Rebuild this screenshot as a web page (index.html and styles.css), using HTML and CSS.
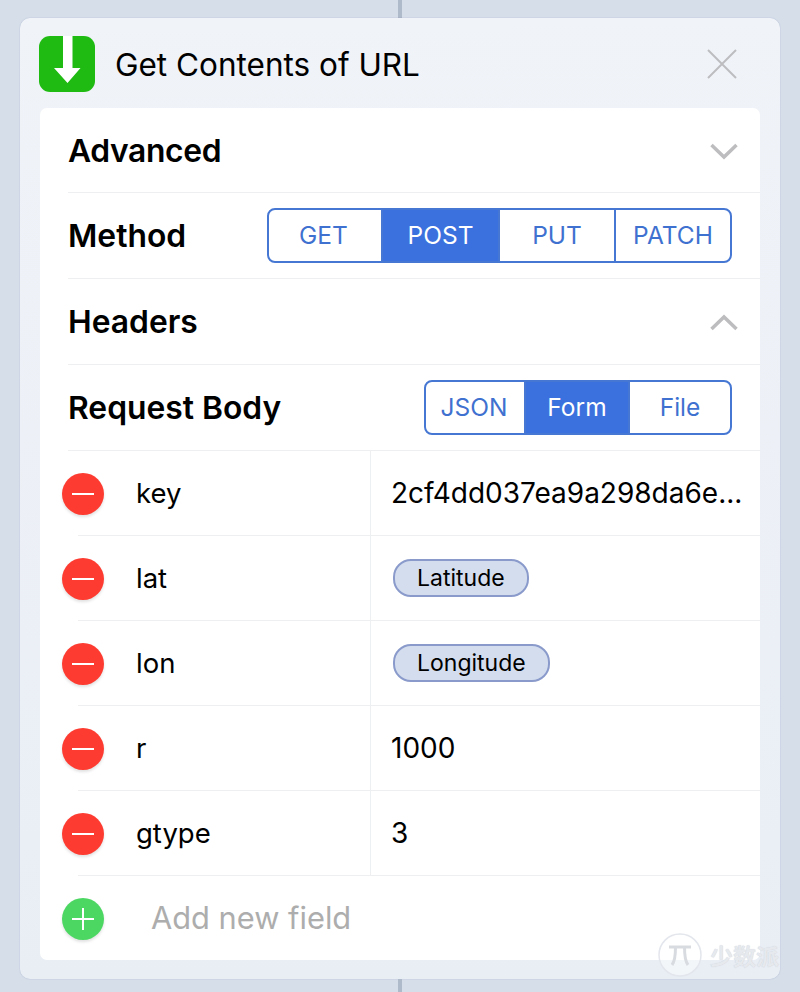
FILE: index.html
```html
<!DOCTYPE html>
<html lang="en">
<head>
  <meta charset="UTF-8" />
  <title>Get Contents of URL</title>
  <link rel="stylesheet" href="styles.css">
</head>
<body>

<div class="connector connector-top"></div>

<div class="card">
  <div class="card-head">
    <svg class="app-icon" width="56" height="56" viewBox="0 0 56 56">
      <rect width="56" height="56" rx="11" fill="#1fbb12"/>
      <path d="M24 0H33.500V32H41.500L28.500 47L15 32H24Z" fill="#fff"/>
    </svg>
    <div class="card-title">Get Contents of URL</div>
    <svg class="close" width="30" height="30" viewBox="0 0 30 30">
      <path d="M1 1L29 29M29 1L1 29" stroke="#bdbdc0" stroke-width="2" fill="none"/>
    </svg>
  </div>

  <div class="panel">
    <div class="row row-first">
      <span class="row-label">Advanced</span>
      <svg class="chev" width="28" height="17" viewBox="0 0 28 17">
        <path d="M1.500 2L14 14L26.500 2" stroke="#bdbdc0" stroke-width="3.500" fill="none"/>
      </svg>
    </div>
    <div class="row">
      <span class="row-label">Method</span>
      <div class="segment">
        <div class="seg seg-get">GET</div>
        <div class="seg seg-post active">POST</div>
        <div class="seg seg-put">PUT</div>
        <div class="seg seg-patch">PATCH</div>
      </div>
    </div>
    <div class="row">
      <span class="row-label">Headers</span>
      <svg class="chev" width="28" height="17" viewBox="0 0 28 17">
        <path d="M1.500 15L14 3L26.500 15" stroke="#bdbdc0" stroke-width="3.500" fill="none"/>
      </svg>
    </div>
    <div class="row">
      <span class="row-label">Request Body</span>
      <div class="segment">
        <div class="seg seg-json">JSON</div>
        <div class="seg seg-form active">Form</div>
        <div class="seg seg-file">File</div>
      </div>
    </div>

    <div class="field">
      <div class="minus"></div>
      <div class="field-body">
        <div class="field-key">key</div>
        <div class="field-value">2cf4dd037ea9a298da6e...</div>
      </div>
    </div>
    <div class="field">
      <div class="minus"></div>
      <div class="field-body">
        <div class="field-key">lat</div>
        <div class="field-value"><span class="token">Latitude</span></div>
      </div>
    </div>
    <div class="field">
      <div class="minus"></div>
      <div class="field-body">
        <div class="field-key">lon</div>
        <div class="field-value"><span class="token">Longitude</span></div>
      </div>
    </div>
    <div class="field">
      <div class="minus"></div>
      <div class="field-body">
        <div class="field-key">r</div>
        <div class="field-value">1000</div>
      </div>
    </div>
    <div class="field">
      <div class="minus"></div>
      <div class="field-body">
        <div class="field-key">gtype</div>
        <div class="field-value">3</div>
      </div>
    </div>

    <div class="add-row">
      <div class="plus"></div>
      <span class="add-label">Add new field</span>
    </div>
  </div>
</div>

<div class="connector connector-bottom"></div>

<div class="watermark">
  <svg width="44" height="44" viewBox="0 0 44 44">
    <circle cx="22" cy="22" r="21" fill="#fff" fill-opacity="0.45" stroke="#e3e6ec" stroke-width="1.500"/>
    <path d="M11 14H33M17.500 14C17.500 22 17 28 14 32M26.500 14C26.500 22 27 28 30 32" stroke="#d8dbe0" stroke-width="3" fill="none"/>
  </svg>
  <span class="watermark-text">少数派</span>
</div>

</body>
</html>
```

FILE: styles.css
```css
body {
  margin: 0;
  height: 992px;
  overflow: hidden;
  position: relative;
  background-color: #d6deea;
  font-family: Inter, "Noto Sans", sans-serif;
  color: #000;
}
.connector {
  width: 4px;
  margin-left: 398px;
  background-color: #aeb9c9;
}
.connector-top {
  height: 18px;
}
.connector-bottom {
  height: 13px;
}
.card {
  box-sizing: border-box;
  width: 760px;
  height: 961px;
  margin-left: 20px;
  padding: 0 20px;
  background: linear-gradient(#f0f3f8, #e9eef5);
  border-radius: 10px;
  box-shadow: 0 0 1px rgba(90,110,150,0.6);
}
.card-head {
  height: 90px;
  display: flex;
  align-items: center;
}
.app-icon {
  margin-left: -1px;
  margin-top: 2px;
}
.card-title {
  margin-left: 20px;
  margin-top: 2px;
  font-size: 31.5px;
  flex: 1;
}
.close {
  margin-right: 23px;
  margin-top: 2px;
}
.panel {
  background: white;
  border-radius: 7px;
  height: 852px;
  overflow: hidden;
}
.row {
  height: 85px;
  margin-left: 28px;
  display: flex;
  align-items: center;
  justify-content: space-between;
  border-bottom: 1px solid #eeeff1;
  padding-right: 28px;
}
.row-first {
  height: 84px;
}
.row-label {
  font-size: 31.8px;
  font-weight: 600;
}
.row-first .row-label {
  letter-spacing: -0.35px;
}
.chev {
  margin-right: -6px;
  margin-top: 2px;
}
.segment {
  display: flex;
  height: 51px;
  border: 2px solid #4577d3;
  border-radius: 8px;
  overflow: hidden;
  font-size: 24.5px;
  color: #3f71d0;
}
.seg {
  display: flex;
  align-items: center;
  justify-content: center;
  box-sizing: border-box;
  padding-bottom: 2px;
  border-left: 2px solid #4577d3;
}
.seg:first-child {
  border-left: none;
}
.seg.active {
  background-color: #3b71de;
  color: white;
}
.seg-get { width: 112px; padding-right: 3px; }
.seg-post { width: 117px; }
.seg-put { width: 116px; }
.seg-patch { width: 116px; }
.seg-json { width: 98px; padding-right: 2px; }
.seg-form { width: 104px; }
.seg-file { width: 102px; }
.field {
  height: 85px;
  display: flex;
  align-items: stretch;
}
.minus, .plus {
  flex: none;
  position: relative;
  align-self: center;
  width: 42px;
  height: 42px;
  margin-left: 22px;
  border-radius: 50%;
  background-color: #fe3b30;
  box-shadow: 0 2px 3px rgba(0,0,0,0.12);
}
.minus::before, .plus::before, .plus::after {
  content: "";
  position: absolute;
  left: 10px;
  top: 20px;
  width: 22px;
  height: 2px;
  background-color: white;
}
.plus {
  background-color: #4cd763;
}
.plus::after {
  left: 20px;
  top: 10px;
  width: 2px;
  height: 22px;
}
.field-body {
  flex: 1;
  margin-left: -26px;
  display: flex;
  border-bottom: 1px solid #eeeff1;
}
.field-key {
  box-sizing: border-box;
  width: 293px;
  padding-left: 58px;
  font-size: 27.5px;
  display: flex;
  align-items: center;
  border-right: 1px solid #eeeff1;
}
.field-value {
  padding-left: 20px;
  font-size: 28px;
  display: flex;
  align-items: center;
  white-space: nowrap;
}
.token {
  margin-left: 2px;
  font-size: 23px;
  padding: 3px 22px 3px;
  background-color: #d3ddee;
  border: 2px solid #8a9bcb;
  border-radius: 18px;
}
.add-row {
  height: 85px;
  display: flex;
  align-items: center;
}
.add-label {
  margin-left: 47px;
  padding-bottom: 2px;
  font-size: 30.8px;
  color: #adadad;
}
.watermark {
  position: absolute;
  left: 658px;
  top: 933px;
  display: flex;
  align-items: center;
  gap: 8px;
}
.watermark-text {
  font-family: "Noto Sans CJK SC", sans-serif;
  font-size: 23px;
  font-weight: 700;
  color: #e6e9ee;
  text-shadow: 0 0 1px #c8ccd4;
}
```
